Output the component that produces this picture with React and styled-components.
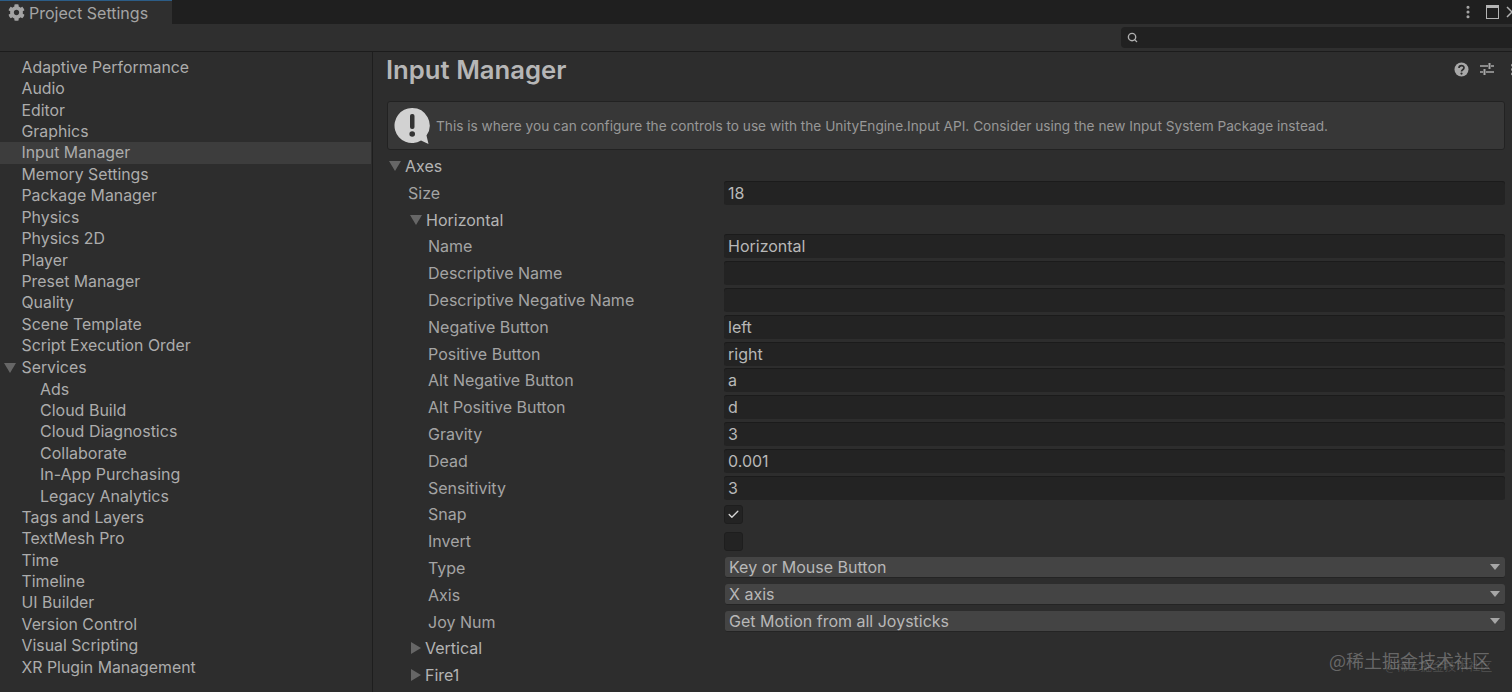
import styled, { createGlobalStyle } from 'styled-components';
import { Search, MoreVertical, Check } from 'lucide-react';
import { FaCog } from 'react-icons/fa';

const GlobalStyle = createGlobalStyle`
  html, body {
    margin: 0;
    padding: 0;
    background: #2d2d2d;
  }
`;

const Window = styled.div`
  position: relative;
  width: 1512px;
  height: 692px;
  overflow: hidden;
  display: flex;
  flex-direction: column;
  background: #2d2d2d;
  color: #b0b0b0;
  font-family: Inter, "Noto Sans CJK SC", sans-serif;
  font-size: 16px;
`;

const TabBar = styled.div`
  height: 24px;
  flex: none;
  display: flex;
  align-items: center;
  background: #1f1f1f;
`;

const Tab = styled.div`
  width: 172px;
  height: 24px;
  box-sizing: border-box;
  display: flex;
  align-items: center;
  gap: 4.5px;
  padding-left: 7.5px;
  background: #2f2f2f;
  border-top: 1px solid #2c5d87;
  color: #a4a4a4;
  font-size: 16.05px;
  svg { flex: none; }
`;

const WindowButtons = styled.div`
  margin-left: auto;
  display: flex;
  align-items: center;
  margin-right: -6px;
  color: #a8a8a8;
`;

const MaxIcon = styled.div`
  width: 11px;
  height: 10px;
  margin: 0 7px 0 10px;
  border: 1px solid #b4b4b4;
  border-top-width: 3px;
`;

const Toolbar = styled.div`
  height: 28px;
  flex: none;
  box-sizing: border-box;
  display: flex;
  justify-content: flex-end;
  align-items: center;
  background: #2f2f2f;
  border-bottom: 1px solid #1c1c1c;
`;

const SearchBox = styled.div`
  width: 391px;
  height: 21px;
  box-sizing: border-box;
  display: flex;
  align-items: center;
  padding-left: 6px;
  background: #212121;
  border-radius: 4px 0 0 4px;
  color: #b0b0b0;
`;

const Body = styled.div`
  flex: 1;
  display: flex;
  min-height: 0;
`;

const Sidebar = styled.nav`
  width: 373px;
  flex: none;
  box-sizing: border-box;
  padding-top: 4.6px;
  border-right: 1px solid #1e1e1e;
`;

const NavRow = styled.div`
  height: 21.43px;
  width: 371px;
  display: flex;
  align-items: center;
  padding-left: ${(p) => (p.$nested ? 40 : 21.5)}px;
  box-sizing: border-box;
  position: relative;
  background: ${(p) => (p.$active ? '#3d3d3d' : 'transparent')};
  color: #acacac;
  font-size: ${(p) => (p.$nested ? 16 : 15.85)}px;
  white-space: nowrap;
`;

const Arrow = styled.span`
  flex: none;
  width: 0;
  height: 0;
  ${(p) =>
    p.$open
      ? `border-left: 6px solid transparent;
         border-right: 6px solid transparent;
         border-top: 10px solid #666;`
      : `border-top: 6px solid transparent;
         border-bottom: 6px solid transparent;
         border-left: 10px solid #666;`}
`;

const NavArrow = styled(Arrow)`
  position: absolute;
  left: 4px;
  top: 6px;
`;

const Inspector = styled.main`
  flex: 1;
  min-width: 0;
  box-sizing: border-box;
  padding: 0 7px 0 14px;
`;

const InspectorHead = styled.header`
  height: 49px;
  box-sizing: border-box;
  padding-bottom: 15px;
  display: flex;
  align-items: center;
`;

const Title = styled.h1`
  margin: 0 0 0 -1px;
  color: #b6b6b6;
  font-size: 25.7px;
  font-weight: 600;
`;

const HeadIcons = styled.div`
  margin-left: auto;
  margin-right: -15px;
  display: flex;
  align-items: center;
  gap: 11px;
  color: #a8a8a8;
`;

const HelpBox = styled.div`
  height: 49px;
  box-sizing: border-box;
  display: flex;
  align-items: center;
  gap: 5px;
  padding-left: 6px;
  background: #373737;
  border: 1px solid #222;
  border-radius: 3px;
  color: #989898;
  font-size: 13.66px;
`;

const Rows = styled.div`
  padding-top: 2.6px;
`;

const Row = styled.div`
  height: 26.8px;
  display: flex;
  align-items: center;
  padding-left: ${(p) => p.$indent}px;
`;

const RowArrow = styled(Arrow)`
  margin-right: 4px;
`;

const Label = styled.div`
  width: ${(p) => 337 - p.$indent - (p.$foldout ? 15 : 0)}px;
  flex: none;
  font-size: 16px;
  color: ${(p) => (p.$foldout ? '#b4b4b4' : '#a4a4a4')};
  white-space: nowrap;
`;

const Field = styled.div`
  flex: 1;
  height: 24px;
  box-sizing: border-box;
  display: flex;
  align-items: center;
  padding-left: 4px;
  background: #232323;
  box-shadow: inset 0 1px 0 #1b1b1b;
  border-radius: 3px;
  color: #b8b8b8;
`;

const Toggle = styled.div`
  width: 19px;
  height: 19px;
  box-sizing: border-box;
  display: flex;
  align-items: center;
  justify-content: center;
  background: #232323;
  border: 1px solid #1e1e1e;
  border-radius: 3px;
  color: #d6d6d6;
`;

const Dropdown = styled.div`
  flex: 1;
  height: 21px;
  margin-left: 1px;
  box-sizing: border-box;
  display: flex;
  align-items: center;
  justify-content: space-between;
  padding: 0 5px 0 4px;
  background: #444;
  border-bottom: 1px solid #242424;
  border-radius: 3px;
  color: #b8b8b8;
`;

const DropArrow = styled.span`
  width: 0;
  height: 0;
  border-left: 5px solid transparent;
  border-right: 5px solid transparent;
  border-top: 6px solid #a6a6a6;
`;

const Watermark = styled.div`
  position: absolute;
  left: 1329px;
  top: 648px;
  color: rgba(190, 190, 190, 0.42);
  font-family: "Noto Sans CJK SC", sans-serif;
  font-size: 18px;
  line-height: 24px;
  white-space: nowrap;
`;

const WatermarkSmall = styled(Watermark)`
  left: 1385px;
  top: 657px;
  font-size: 12px;
  line-height: 18px;
  color: rgba(190, 190, 190, 0.22);
`;

const navItems = [
  { name: 'Adaptive Performance' },
  { name: 'Audio' },
  { name: 'Editor' },
  { name: 'Graphics' },
  { name: 'Input Manager', active: true },
  { name: 'Memory Settings' },
  { name: 'Package Manager' },
  { name: 'Physics' },
  { name: 'Physics 2D' },
  { name: 'Player' },
  { name: 'Preset Manager' },
  { name: 'Quality' },
  { name: 'Scene Template' },
  { name: 'Script Execution Order' },
  { name: 'Services', open: true },
  { name: 'Ads', nested: true },
  { name: 'Cloud Build', nested: true },
  { name: 'Cloud Diagnostics', nested: true },
  { name: 'Collaborate', nested: true },
  { name: 'In-App Purchasing', nested: true },
  { name: 'Legacy Analytics', nested: true },
  { name: 'Tags and Layers' },
  { name: 'TextMesh Pro' },
  { name: 'Time' },
  { name: 'Timeline' },
  { name: 'UI Builder' },
  { name: 'Version Control' },
  { name: 'Visual Scripting' },
  { name: 'XR Plugin Management' },
];

const rows = [
  { label: 'Axes', indent: 2, foldout: 'open' },
  { label: 'Size', indent: 21, value: '18' },
  { label: 'Horizontal', indent: 23, foldout: 'open' },
  { label: 'Name', indent: 41, value: 'Horizontal' },
  { label: 'Descriptive Name', indent: 41, value: '' },
  { label: 'Descriptive Negative Name', indent: 41, value: '' },
  { label: 'Negative Button', indent: 41, value: 'left' },
  { label: 'Positive Button', indent: 41, value: 'right' },
  { label: 'Alt Negative Button', indent: 41, value: 'a' },
  { label: 'Alt Positive Button', indent: 41, value: 'd' },
  { label: 'Gravity', indent: 41, value: '3' },
  { label: 'Dead', indent: 41, value: '0.001' },
  { label: 'Sensitivity', indent: 41, value: '3' },
  { label: 'Snap', indent: 41, toggle: true, checked: true },
  { label: 'Invert', indent: 41, toggle: true },
  { label: 'Type', indent: 41, select: 'Key or Mouse Button' },
  { label: 'Axis', indent: 41, select: 'X axis' },
  { label: 'Joy Num', indent: 41, select: 'Get Motion from all Joysticks' },
  { label: 'Vertical', indent: 24, foldout: 'closed' },
  { label: 'Fire1', indent: 24, foldout: 'closed' },
];

const HelpIcon = () => (
  <svg width="37" height="38" viewBox="0 0 37 38">
    <path d="M18 1a17.5 17.5 0 1 0 9 32.5l7.5 3.5-2-8.5A17.5 17.5 0 0 0 18 1z" fill="#d2d2d2" />
    <rect x="16" y="7" width="4.5" height="15" rx="2" fill="#333" />
    <circle cx="18.2" cy="27" r="2.8" fill="#333" />
  </svg>
);

const QuestionIcon = () => (
  <svg width="15" height="15" viewBox="0 0 15 15">
    <circle cx="7.5" cy="7.5" r="7" fill="#a8a8a8" />
    <path d="M5 6c0-3.2 5-3.2 5 -.2 0 2-2.5 1.8-2.5 3.7" fill="none" stroke="#2d2d2d" strokeWidth="1.7" />
    <circle cx="7.5" cy="11.6" r="1.1" fill="#2d2d2d" />
  </svg>
);

const PresetIcon = () => (
  <svg width="14" height="14" viewBox="0 0 14 14">
    <path d="M0 4h8M11 4h3M0 10h3M6 10h8" stroke="#a8a8a8" strokeWidth="1.3" fill="none" />
    <path d="M9.5 1v6M4.5 7v6" stroke="#a8a8a8" strokeWidth="2" fill="none" />
  </svg>
);

const CloseIcon = () => (
  <svg width="12" height="12" viewBox="0 0 12 12">
    <path d="M1 1l10 10M11 1L1 11" stroke="#b0b0b0" strokeWidth="1.5" />
  </svg>
);

const Control = ({ row }) => {
  if (row.toggle) {
    return <Toggle>{row.checked && <Check size={13} strokeWidth={2.5} />}</Toggle>;
  }
  if (row.select) {
    return (
      <Dropdown>
        {row.select}
        <DropArrow />
      </Dropdown>
    );
  }
  if (row.value !== undefined) {
    return <Field>{row.value}</Field>;
  }
  return null;
};

const App = () => (
  <Window>
    <GlobalStyle />
    <TabBar>
      <Tab>
        <FaCog size={17} color="#a4a4a4" />
        Project Settings
      </Tab>
      <WindowButtons>
        <MoreVertical size={16} strokeWidth={2.6} />
        <MaxIcon />
        <CloseIcon />
      </WindowButtons>
    </TabBar>
    <Toolbar>
      <SearchBox>
        <Search size={11} strokeWidth={3} />
      </SearchBox>
    </Toolbar>
    <Body>
      <Sidebar>
        {navItems.map((item) => (
          <NavRow key={item.name} $nested={item.nested} $active={item.active}>
            {item.open && <NavArrow $open />}
            {item.name}
          </NavRow>
        ))}
      </Sidebar>
      <Inspector>
        <InspectorHead>
          <Title>Input Manager</Title>
          <HeadIcons>
            <QuestionIcon />
            <PresetIcon />
            <MoreVertical size={15} strokeWidth={2.6} />
          </HeadIcons>
        </InspectorHead>
        <HelpBox>
          <HelpIcon />
          This is where you can configure the controls to use with the UnityEngine.Input API. Consider using the new Input System Package instead.
        </HelpBox>
        <Rows>
          {rows.map((row) => (
            <Row key={row.label} $indent={row.indent}>
              {row.foldout && <RowArrow $open={row.foldout === 'open'} />}
              <Label $indent={row.indent} $foldout={!!row.foldout}>
                {row.label}
              </Label>
              <Control row={row} />
            </Row>
          ))}
        </Rows>
      </Inspector>
    </Body>
    <Watermark>@稀土掘金技术社区</Watermark>
    <WatermarkSmall>@稀土掘金技术社区</WatermarkSmall>
  </Window>
);

export default App;
